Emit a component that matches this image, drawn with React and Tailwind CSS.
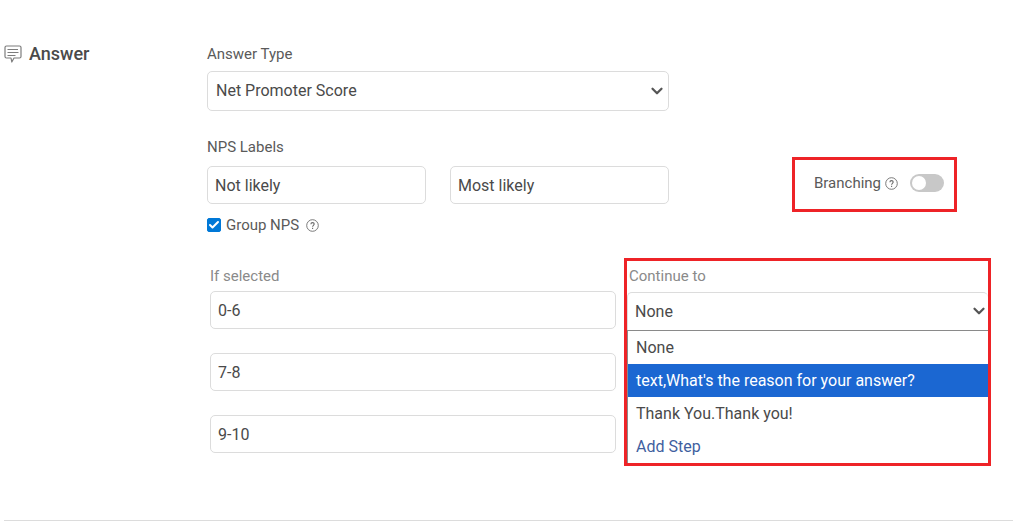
import { useState } from 'react'
import { Check, ChevronDown } from 'lucide-react'

const ANSWER_TYPES = ['Net Promoter Score', 'Multiple choice', 'Text']

const STEPS = [
  { id: 'none', label: 'None' },
  { id: 'reason', label: "text,What's the reason for your answer?" },
  { id: 'thanks', label: 'Thank You.Thank you!' },
]

const fieldClass = 'block h-[38px] w-full min-w-0 rounded-[5px] border border-[#dcdcdc] bg-white px-[7px] text-[16px] text-[#4a4a4a] outline-none'

function AnswerIcon() {
  return (
    <svg width="18" height="18" viewBox="0 0 18 18" fill="none" stroke="#7d7d7d" strokeLinejoin="round" className="shrink-0">
      <path d="M3 1h12.500A1.500 1.500 0 0 1 17 2.500v9a1.500 1.500 0 0 1-1.500 1.500H10l-2.200 4-.8-4H2.500A1.500 1.500 0 0 1 1 11.500v-9A1.500 1.500 0 0 1 2.500 1z" strokeWidth="1.200" />
      <path d="M3.500 4.500h10.500M3.500 7.500h11M3.500 10.500h8" />
    </svg>
  )
}

function HelpIcon() {
  return (
    <svg width="13" height="13" viewBox="0 0 13 13" fill="none" stroke="#6b6b6b" className="shrink-0">
      <circle cx="6.500" cy="6.500" r="5.800" strokeWidth="0.900" />
      <path d="M4.900 5.200c0-2.200 3.300-2.100 3.300-.1 0 1.200-1.600 1.300-1.600 2.700M6.600 8.700v1.200" strokeWidth="1.100" />
    </svg>
  )
}

export default function App() {
  const [answerType, setAnswerType] = useState(ANSWER_TYPES[0])
  const [grouped, setGrouped] = useState(true)
  const [branching, setBranching] = useState(false)
  const [nextStep, setNextStep] = useState('none')
  const [active, setActive] = useState('reason')

  return (
    <main className="bg-white pt-11 pr-[11px] pl-1 font-['Roboto',sans-serif] text-[15px] leading-5 text-[#5a5a5a]">
      <section className="flex border-b border-[#dcdcdc] pb-[54px]">
        <div className="w-[203px] shrink-0">
          <h2 className="flex items-center gap-[7px] text-[18px] leading-5 font-medium text-[#4a4a4a]">
            <AnswerIcon />
            Answer
          </h2>
        </div>

        <div className="min-w-0 flex-1">
          <div className="max-w-[462px]">
            <label htmlFor="answer-type" className="block">Answer Type</label>
            <div className="mt-[7px] grid items-center">
              <select
                id="answer-type"
                value={answerType}
                onChange={e => setAnswerType(e.target.value)}
                className="col-start-1 row-start-1 h-10 w-full appearance-none rounded-[5px] border border-[#dcdcdc] bg-white px-2 text-[16px] text-[#4a4a4a] outline-none"
              >
                {ANSWER_TYPES.map(type => <option key={type}>{type}</option>)}
              </select>
              <ChevronDown size={18} strokeWidth={3} className="pointer-events-none col-start-1 row-start-1 mr-[3px] justify-self-end text-[#555]" />
            </div>
          </div>

          <div className="mt-[26px] flex items-start">
            <fieldset className="w-full max-w-[462px] min-w-0">
              <legend>NPS Labels</legend>
              <div className="mt-[9px] grid grid-cols-2 gap-6">
                <input type="text" aria-label="Lowest score label" defaultValue="Not likely" className={fieldClass} />
                <input type="text" aria-label="Highest score label" defaultValue="Most likely" className={fieldClass} />
              </div>
              <div className="mt-[11px] flex items-center gap-[7px]">
                <label className="flex items-center gap-[5px]">
                  <span className="grid items-center">
                    <input
                      type="checkbox"
                      checked={grouped}
                      onChange={e => setGrouped(e.target.checked)}
                      className="col-start-1 row-start-1 size-[14px] appearance-none rounded-[2px] border border-[#777] checked:border-[#0078d7] checked:bg-[#0078d7]"
                    />
                    {grouped && <Check size={12} strokeWidth={4} className="pointer-events-none col-start-1 row-start-1 justify-self-center text-white" />}
                  </span>
                  Group NPS
                </label>
                <HelpIcon />
              </div>
            </fieldset>

            <div className="mt-5 mr-14 ml-auto flex h-[55px] shrink-0 items-center border-[3px] border-[#ee2327] pr-[10px] pb-[3px] pl-[19px]">
              <label htmlFor="branching" className="mr-1">Branching</label>
              <HelpIcon />
              <input
                id="branching"
                type="checkbox"
                role="switch"
                checked={branching}
                onChange={e => setBranching(e.target.checked)}
                className="ml-3 h-[18px] w-[34px] appearance-none rounded-full bg-[#c8c8c8] p-[2px] before:block before:size-[14px] before:rounded-full before:bg-white checked:bg-[#0078d7] checked:before:ml-auto"
              />
            </div>
          </div>

          <div className="mt-[23px] mr-[22px] ml-[3px] grid grid-cols-[406fr_367fr] gap-2">
            <fieldset className="min-w-0 pt-2 text-[#8a8a8a]">
              <legend className="float-left w-full">If selected</legend>
              <div className="clear-both grid gap-6 pt-[5px]">
                <input type="text" aria-label="First group" defaultValue="0-6" className={fieldClass} />
                <input type="text" aria-label="Second group" defaultValue="7-8" className={fieldClass} />
                <input type="text" aria-label="Third group" defaultValue="9-10" className={fieldClass} />
              </div>
            </fieldset>

            <div className="min-w-0 border-[3px] border-[#ee2327] pt-[5px] text-[#8a8a8a]">
              <label htmlFor="continue-to" className="block pl-[2px]">Continue to</label>
              <div className="mt-[6px] grid items-center">
                <select
                  id="continue-to"
                  value={nextStep}
                  onChange={e => setNextStep(e.target.value)}
                  className="col-start-1 row-start-1 h-[38px] w-full appearance-none rounded-t-[5px] border-t border-l border-[#dcdcdc] bg-white px-[7px] text-[16px] text-[#4a4a4a] outline-none"
                >
                  {STEPS.map(step => <option key={step.id} value={step.id}>{step.label}</option>)}
                </select>
                <ChevronDown size={18} strokeWidth={3} className="pointer-events-none col-start-1 row-start-1 justify-self-end text-[#555]" />
              </div>
              <div role="listbox" aria-label="Steps" className="border-t border-l border-[#8a8a8a] text-[16px] text-[#4a4a4a]">
                {STEPS.map(step => (
                  <button
                    key={step.id}
                    type="button"
                    role="option"
                    aria-selected={step.id === active}
                    onMouseEnter={() => setActive(step.id)}
                    onClick={() => setNextStep(step.id)}
                    className={`block h-[33px] w-full px-2 text-left ${step.id === active ? 'bg-[#1b67d2] text-white' : 'bg-white'}`}
                  >
                    {step.label}
                  </button>
                ))}
                <button type="button" className="block h-[33px] w-full px-2 text-left text-[#3f5f9f]">Add Step</button>
              </div>
            </div>
          </div>
        </div>
      </section>
    </main>
  )
}
